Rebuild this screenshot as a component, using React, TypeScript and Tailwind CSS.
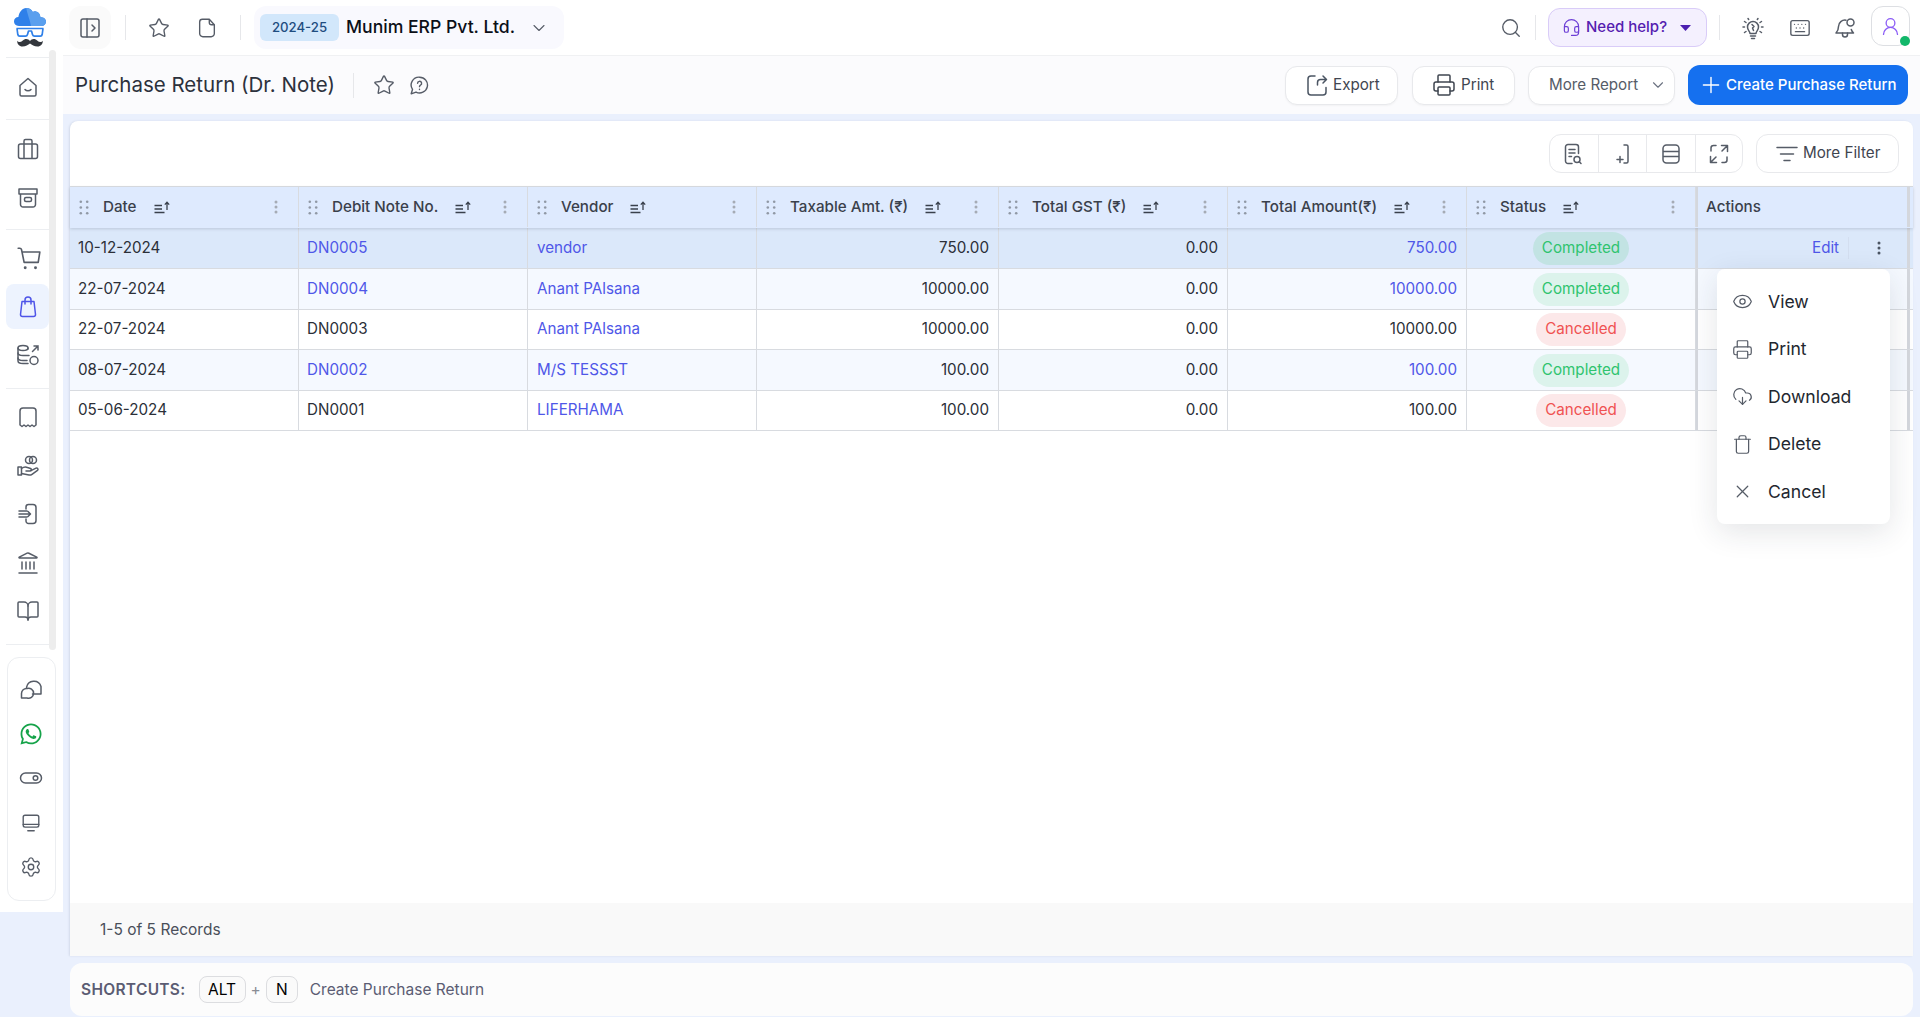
import { ReactNode } from 'react'
import {
  BookOpen,
  ChevronDown,
  CloudDownload,
  Eye,
  Headset,
  Keyboard,
  Landmark,
  PanelLeftOpen,
  Plus,
  Printer,
  Search,
  Settings,
  Star,
  Trash,
  UserRound,
  X,
} from 'lucide-react'
import { FaWhatsapp } from 'react-icons/fa'

type Row = {
  date: string
  no: string
  noLink: boolean
  vendor: string
  taxable: string
  total: string
  totalLink: boolean
  status: 'Completed' | 'Cancelled'
  height: string
  bg: string
  highlight?: boolean
}

const rows: Row[] = [
  { date: '10-12-2024', no: 'DN0005', noLink: true, vendor: 'vendor', taxable: '750.00', total: '750.00', totalLink: true, status: 'Completed', height: 'h-[41px]', bg: 'bg-[#dbe8fa]', highlight: true },
  { date: '22-07-2024', no: 'DN0004', noLink: true, vendor: 'Anant PAlsana', taxable: '10000.00', total: '10000.00', totalLink: true, status: 'Completed', height: 'h-[41px]', bg: 'bg-[#f5f9ff]' },
  { date: '22-07-2024', no: 'DN0003', noLink: false, vendor: 'Anant PAlsana', taxable: '10000.00', total: '10000.00', totalLink: false, status: 'Cancelled', height: 'h-[40px]', bg: 'bg-white' },
  { date: '08-07-2024', no: 'DN0002', noLink: true, vendor: 'M/S TESSST', taxable: '100.00', total: '100.00', totalLink: true, status: 'Completed', height: 'h-[41px]', bg: 'bg-[#f5f9ff]' },
  { date: '05-06-2024', no: 'DN0001', noLink: false, vendor: 'LIFERHAMA', taxable: '100.00', total: '100.00', totalLink: false, status: 'Cancelled', height: 'h-[40px]', bg: 'bg-white' },
]

const columns = [
  { label: 'Date', width: 'w-[229px]' },
  { label: 'Debit Note No.', width: 'w-[229px]' },
  { label: 'Vendor', width: 'w-[229px]' },
  { label: 'Taxable Amt. (₹)', width: 'w-[242px]' },
  { label: 'Total GST (₹)', width: 'w-[229px]' },
  { label: 'Total Amount(₹)', width: 'w-[239px]' },
  { label: 'Status', width: 'w-[229px]' },
]

function Logo() {
  return (
    <svg width="34" height="41" viewBox="0 0 34 41" fill="none">
      <path d="M6 19C2.500 19 1 16.500 1 14.300 1 11.700 3 9.900 5.400 9.900 6 5.200 9.400 1 13.200 1c3 0 5.400 1.500 6.600 4 1-.6 2-.8 3-.6 2.600.4 4.400 2.400 4.600 5.500 3 .2 5.600 1.800 5.600 4.600 0 2.400-2 4.500-4.600 4.500z" fill="#2f80e9" />
      <path d="M13.200 1c3 0 5.400 1.500 6.600 4 1-.6 2-.8 3-.6 2.600.4 4.400 2.400 4.600 5.500 3 .2 5.600 1.800 5.600 4.600 0 2.400-2 4.500-4.600 4.500H18c-1-6-4-13-4.800-18z" fill="#5a9fee" />
      <path d="M3.500 21.500h27M4 21.500l.8 6c.2 1 .9 1.700 1.900 1.700h5.800c1 0 1.700-.6 2-1.600l1-3.600h3l1 3.600c.3 1 1 1.600 2 1.600h5.800c1 0 1.700-.7 1.900-1.700l.8-6" stroke="#2f80e9" strokeWidth="1.700" strokeLinejoin="round" />
      <path d="M17 34c-1-1.400-2.800-2.500-4.600-2-2.400.7-3.300 3-6 3-1 0-1.700-.4-2.200-1.200-.2 3 2 5.800 5.300 5.800 3.300 0 5.600-2 7.500-3.200 1.900 1.200 4.200 3.200 7.500 3.200 3.300 0 5.500-2.800 5.300-5.800-.5.8-1.200 1.200-2.200 1.200-2.700 0-3.600-2.300-6-3-1.800-.5-3.600.6-4.600 2z" fill="#33373d" />
    </svg>
  )
}

function HomeIcon() {
  return (
    <svg width="24" height="24" viewBox="0 0 24 24" fill="none" stroke="#565c67" strokeWidth="1.500" strokeLinejoin="round" strokeLinecap="round">
      <path d="M4 10.500 12 3.500l8 7v9a1.500 1.500 0 0 1-1.500 1.500h-13A1.500 1.500 0 0 1 4 19.500z" />
      <path d="M9 14.500c1.500 1.800 4.500 1.800 6 0" />
    </svg>
  )
}

function LuggageIcon() {
  return (
    <svg width="24" height="24" viewBox="0 0 24 24" fill="none" stroke="#565c67" strokeWidth="1.500" strokeLinejoin="round">
      <rect x="2.500" y="7" width="19" height="14.500" rx="2" />
      <path d="M8 21.500V4a1.500 1.500 0 0 1 1.500-1.500h5A1.500 1.500 0 0 1 16 4v17.500" />
    </svg>
  )
}

function ArchiveIcon() {
  return (
    <svg width="24" height="24" viewBox="0 0 24 24" fill="none" stroke="#565c67" strokeWidth="1.500" strokeLinejoin="round">
      <path d="M3 3h18v5H3z" />
      <path d="M4.500 8v10.500a2.500 2.500 0 0 0 2.500 2.500h10a2.500 2.500 0 0 0 2.500-2.500V8" />
      <rect x="8.500" y="11.500" width="7" height="4" rx="1.500" />
    </svg>
  )
}

function CartIcon() {
  return (
    <svg width="26" height="26" viewBox="0 0 24 24" fill="none" stroke="#565c67" strokeWidth="1.500" strokeLinejoin="round" strokeLinecap="round">
      <path d="M2 3h1.500c.8 0 1.400.5 1.600 1.300L7.500 16h13l1.500-9.500H5.500" />
      <circle cx="8.500" cy="21" r=".6" fill="#565c67" />
      <circle cx="18" cy="21" r=".6" fill="#565c67" />
    </svg>
  )
}

function BagIcon() {
  return (
    <svg width="24" height="24" viewBox="0 0 24 24" fill="none" stroke="#4f55e8" strokeWidth="1.500" strokeLinejoin="round" strokeLinecap="round">
      <path d="M6 6.500h12l1.500 13a2 2 0 0 1-2 2h-11a2 2 0 0 1-2-2z" />
      <path d="M9 9V5a3 3 0 0 1 6 0v4" />
    </svg>
  )
}

function DataIcon() {
  return (
    <svg width="24" height="24" viewBox="0 0 24 24" fill="none" stroke="#565c67" strokeWidth="1.500" strokeLinecap="round">
      <path d="M12 6V5c0-1.400-2.200-2.500-5-2.500S2 3.600 2 5v13c0 1.400 2.200 2.500 5 2.500h5" />
      <path d="M2 5c0 1.400 2.200 2.500 5 2.500s5-1.100 5-2.500M2 10c0 1.400 2.200 2.500 5 2.500h6M2 15c0 1.400 2.200 2.500 5 2.500h4" />
      <circle cx="18" cy="17.500" r="4" />
      <path d="M16.500 8.500l5.500-5.500M18 3h4v4" />
    </svg>
  )
}

function ReceiptIcon() {
  return (
    <svg width="24" height="24" viewBox="0 0 24 24" fill="none" stroke="#565c67" strokeWidth="1.500" strokeLinejoin="round" strokeLinecap="round">
      <path d="M4 20V6a3 3 0 0 1 3-3h10a3 3 0 0 1 3 3v14l-2 1.500-2-1.500-2 1.500-2-1.500-2 1.500-2-1.500-2 1.500z" />
    </svg>
  )
}

function CoinsHandIcon() {
  return (
    <svg width="24" height="24" viewBox="0 0 24 24" fill="none" stroke="#565c67" strokeWidth="1.500" strokeLinejoin="round" strokeLinecap="round">
      <circle cx="13" cy="6" r="3.500" />
      <circle cx="17" cy="6" r="3.500" />
      <path d="M2 13h3.500v8H2z" />
      <path d="M5.500 14.500c2-1.500 4-2 6-1l3 1c1.300.5 1 2.500-.5 2.500h-4" />
      <path d="M5.500 19.500l7.500 1.500c1 .2 2 0 3-.7l5.500-4c1.200-1 0-2.800-1.500-2.200l-5 2.500" />
    </svg>
  )
}

function SignInIcon() {
  return (
    <svg width="24" height="24" viewBox="0 0 24 24" fill="none" stroke="#565c67" strokeWidth="1.500" strokeLinejoin="round" strokeLinecap="round">
      <path d="M10 7V5a2.500 2.500 0 0 1 2.500-2.500H17a3 3 0 0 1 3 3v13a3 3 0 0 1-3 3h-4.500A2.500 2.500 0 0 1 10 19v-2" />
      <path d="M3 9h8M3 12h11M3 15h8M12 9.500l2.500 2.500-2.500 2.500" />
    </svg>
  )
}

function ChatsIcon() {
  return (
    <svg width="24" height="24" viewBox="0 0 24 24" fill="none" stroke="#565c67" strokeWidth="1.500" strokeLinejoin="round" strokeLinecap="round">
      <path d="M7.500 10.500A7.500 7.500 0 0 1 22 9.500V17h-8.500" />
      <path d="M8 11.500a5 5 0 1 1 0 9.500H2.500v-4.500A5 5 0 0 1 8 11.500z" />
    </svg>
  )
}

function ToggleIcon() {
  return (
    <svg width="24" height="24" viewBox="0 0 24 24" fill="none" stroke="#565c67" strokeWidth="1.500">
      <rect x="1.500" y="7" width="21" height="10" rx="5" />
      <circle cx="16.500" cy="12" r="2.300" />
    </svg>
  )
}

function ScreenIcon() {
  return (
    <svg width="22" height="22" viewBox="0 0 24 24" fill="none" stroke="#565c67" strokeWidth="1.500" strokeLinecap="round">
      <rect x="3.500" y="3.500" width="17" height="13" rx="2" />
      <path d="M3.500 13.500h17M8.500 20.500h7" />
    </svg>
  )
}

function BulbIcon() {
  return (
    <svg width="24" height="24" viewBox="0 0 24 24" fill="none" stroke="#565c67" strokeWidth="1.500" strokeLinecap="round" strokeLinejoin="round">
      <path d="M9 17.500c0-2-2.500-3-2.500-6.500a5.500 5.500 0 0 1 11 0c0 3.500-2.500 4.500-2.500 6.500z" />
      <path d="M9.500 20h5M10.500 22.500h3M11 8.500l2 2-1.500 1.500 1 2.500" />
      <path d="M3.500 5.500l1.500 1M20.500 5.500l-1.500 1M2 11h1.500M20.500 11H22M3.500 16.500l1.500-1M20.500 16.500l-1.500-1M7 2.500l.7 1M17 2.500l-.7 1" />
    </svg>
  )
}

function BellIcon() {
  return (
    <svg width="24" height="24" viewBox="0 0 24 24" fill="none" stroke="#565c67" strokeWidth="1.500" strokeLinejoin="round" strokeLinecap="round">
      <path d="M13 4.200A6.500 6.500 0 0 0 5.500 10.500c0 3.500-1 5-2.500 6.500h17.500c-1-1-1.800-2-2.200-3.500" />
      <path d="M9.500 17v1.500a2.500 2.500 0 0 0 5 0V17" />
      <circle cx="17.500" cy="6.500" r="3.500" />
    </svg>
  )
}

function FileIcon() {
  return (
    <svg width="22" height="22" viewBox="0 0 24 24" fill="none" stroke="#565c67" strokeWidth="1.500" strokeLinejoin="round">
      <path d="M7 2.500h7.500L20 8.500V18a3.500 3.500 0 0 1-3.500 3.500h-9A3.500 3.500 0 0 1 4 18V5.500a3 3 0 0 1 3-3z" />
      <path d="M14.500 2.500V6A2.500 2.500 0 0 0 17 8.500h3" />
    </svg>
  )
}

function ExportIcon() {
  return (
    <svg width="24" height="24" viewBox="0 0 24 24" fill="none" stroke="#4b5563" strokeWidth="1.500" strokeLinejoin="round" strokeLinecap="round">
      <path d="M10 3H6a3 3 0 0 0-3 3v13a3 3 0 0 0 3 3h12a3 3 0 0 0 3-3v-4.500" />
      <path d="M12.500 12V9.500A3 3 0 0 1 15.500 6.500H21M18 3l3.500 3.500L18 10" />
    </svg>
  )
}

function DocSearchIcon() {
  return (
    <svg width="24" height="24" viewBox="0 0 24 24" fill="none" stroke="#565c67" strokeWidth="1.500" strokeLinejoin="round" strokeLinecap="round">
      <path d="M11 21.500H7A2.500 2.500 0 0 1 4.500 19V5A2.500 2.500 0 0 1 7 2.500h8A2.500 2.500 0 0 1 17.500 5v6.500" />
      <path d="M8 7.500h6M8 11h6M8 14.500h2.500" />
      <circle cx="16" cy="17.500" r="3" />
      <path d="M18.300 19.800l1.700 1.700" />
    </svg>
  )
}

function ColumnIcon() {
  return (
    <svg width="24" height="24" viewBox="0 0 24 24" fill="none" stroke="#565c67" strokeWidth="1.500" strokeLinejoin="round" strokeLinecap="round">
      <path d="M13 3h2.500A1.500 1.500 0 0 1 17 4.500v15a1.500 1.500 0 0 1-1.500 1.500H13" />
      <path d="M6 17.500h6M9 14.500v6" />
    </svg>
  )
}

function RowsIcon() {
  return (
    <svg width="24" height="24" viewBox="0 0 24 24" fill="none" stroke="#565c67" strokeWidth="1.500" strokeLinejoin="round">
      <rect x="4" y="3" width="16" height="18" rx="3.500" />
      <path d="M4 9.500h16M4 14.500h16" />
    </svg>
  )
}

function ExpandIcon() {
  return (
    <svg width="24" height="24" viewBox="0 0 24 24" fill="none" stroke="#565c67" strokeWidth="1.500" strokeLinejoin="round" strokeLinecap="round">
      <path d="M4 9V6a2.500 2.500 0 0 1 2.500-2.500H9" />
      <path d="M20 15v3a2.500 2.500 0 0 1-2.500 2.500H15" />
      <path d="M14.500 3.500H20.500V9.500M20.500 3.500l-5.500 5.500" />
      <path d="M9.500 20.500H3.500V14.500M3.500 20.500l5.500-5.500" />
    </svg>
  )
}

function FilterIcon() {
  return (
    <svg width="22" height="18" viewBox="0 0 22 18" fill="none" stroke="#565c67" strokeWidth="1.500" strokeLinecap="round">
      <path d="M1 2.500h20M4.500 9h13M8 15.500h6" />
    </svg>
  )
}

function Grip() {
  return (
    <svg width="10" height="15" viewBox="0 0 10 15" fill="#9098a5" className="shrink-0">
      <circle cx="1.800" cy="1.800" r="1.300" />
      <circle cx="8.200" cy="1.800" r="1.300" />
      <circle cx="1.800" cy="7.500" r="1.300" />
      <circle cx="8.200" cy="7.500" r="1.300" />
      <circle cx="1.800" cy="13.200" r="1.300" />
      <circle cx="8.200" cy="13.200" r="1.300" />
    </svg>
  )
}

function SortIcon() {
  return (
    <svg width="16" height="13" viewBox="0 0 16 13" fill="none" stroke="#39404c" strokeWidth="1.300" className="shrink-0">
      <path d="M0.500 4.500h7.500M0.500 8h7.500M0.500 11.500h10" />
      <path d="M13 9V1.500M10.800 3.600 13 1.200l2.200 2.400" />
    </svg>
  )
}

function Kebab({ color = '#a5abb5' }: { color?: string }) {
  return (
    <svg width="4" height="14" viewBox="0 0 4 14" fill={color} className="shrink-0">
      <circle cx="2" cy="2" r="1.500" />
      <circle cx="2" cy="7" r="1.500" />
      <circle cx="2" cy="12" r="1.500" />
    </svg>
  )
}

function OutlineButton({ className, children }: { className: string; children: ReactNode }) {
  return (
    <button className={`flex items-center rounded-xl border border-[#e8e9ec] bg-white text-[15.2px] text-[#3f4550] shadow-[0_1px_2px_rgba(0,0,0,0.04)] ${className}`}>
      {children}
    </button>
  )
}

function SideRow({ active, children }: { active?: boolean; children: ReactNode }) {
  return (
    <div className="flex h-[48.5px] items-center">
      <div className={`ml-[6px] flex h-[45px] w-[43px] items-center pl-[10px] ${active ? 'rounded-lg bg-[#edf3fe]' : ''}`}>{children}</div>
    </div>
  )
}

function SideDivider() {
  return <div className="ml-[6px] w-[43px] border-t border-[#eceef1]" />
}

function GroupRow({ children }: { children: ReactNode }) {
  return <div className="flex h-[44.5px] items-center justify-center pr-[1px]">{children}</div>
}

function Sidebar() {
  return (
    <aside className="relative h-[912px] w-[63px] shrink-0 bg-white">
      <div className="flex h-[57px] items-center pb-[2px] pl-[13px]">
        <Logo />
      </div>
      <SideDivider />
      <div className="h-[61px] pt-[5px]">
        <SideRow>
          <HomeIcon />
        </SideRow>
      </div>
      <SideDivider />
      <div className="h-[109px] pt-[5px]">
        <SideRow>
          <LuggageIcon />
        </SideRow>
        <SideRow>
          <ArchiveIcon />
        </SideRow>
      </div>
      <SideDivider />
      <div className="h-[158px] pt-[4px]">
        <SideRow>
          <CartIcon />
        </SideRow>
        <SideRow active>
          <BagIcon />
        </SideRow>
        <SideRow>
          <DataIcon />
        </SideRow>
      </div>
      <SideDivider />
      <div className="h-[255px] pt-[4px]">
        <SideRow>
          <ReceiptIcon />
        </SideRow>
        <SideRow>
          <CoinsHandIcon />
        </SideRow>
        <SideRow>
          <SignInIcon />
        </SideRow>
        <SideRow>
          <Landmark size={24} strokeWidth={1.5} color="#565c67" />
        </SideRow>
        <SideRow>
          <BookOpen size={24} strokeWidth={1.5} color="#565c67" />
        </SideRow>
      </div>
      <SideDivider />
      <div className="ml-[7px] mt-[12px] h-[244px] w-[49px] rounded-xl border border-[#eceef1] pt-[9px]">
        <GroupRow>
          <ChatsIcon />
        </GroupRow>
        <GroupRow>
          <FaWhatsapp size={24} color="#16a34a" />
        </GroupRow>
        <GroupRow>
          <ToggleIcon />
        </GroupRow>
        <GroupRow>
          <ScreenIcon />
        </GroupRow>
        <GroupRow>
          <Settings size={22} strokeWidth={1.5} color="#565c67" />
        </GroupRow>
      </div>
      {/* sidebar scrollbar */}
      <div className="absolute left-[49px] top-[50px] h-[600px] w-[7px] rounded-full bg-[#ededed]" />
    </aside>
  )
}

function TopBar() {
  return (
    <header className="flex h-[56px] items-center border-b border-[#f0f1f3] bg-white pl-[6px] pr-[10px]">
      <div className="flex h-[43px] w-[42px] items-center justify-center rounded-xl bg-[#fafafa]">
        <PanelLeftOpen size={24} strokeWidth={1.5} color="#565c67" />
      </div>
      <div className="ml-[14px] h-[25px] w-px bg-[#e6e7ea]" />
      <div className="ml-[21px] flex w-6 justify-center">
        <Star size={22} strokeWidth={1.5} color="#565c67" />
      </div>
      <div className="ml-[24px] flex w-6 justify-center">
        <FileIcon />
      </div>
      <div className="ml-[21px] h-[25px] w-px bg-[#e6e7ea]" />
      <div className="ml-[13px] flex h-[43px] w-[310px] items-center rounded-xl bg-[#f9f9fe] pl-[6px]">
        <span className="flex h-[27px] w-[79px] items-center justify-center rounded-md bg-[#d2e7fb] text-[13.2px] font-medium text-[#1f4d80]">2024-25</span>
        <span className="ml-[7px] text-[17.6px] font-medium text-[#0b0f17]">Munim ERP Pvt. Ltd.</span>
        <ChevronDown className="ml-[14px]" size={20} strokeWidth={1.3} color="#565c67" />
      </div>
      <div className="ml-auto flex w-6 justify-center">
        <Search size={22} strokeWidth={1.5} color="#565c67" />
      </div>
      <div className="ml-[12px] h-[25px] w-px bg-[#e6e7ea]" />
      <button className="ml-[12px] flex h-[39px] w-[159px] items-center rounded-xl border border-[#d9ccf8] bg-[#f4f0fe] pl-[13px] text-[15px] font-medium text-[#5520b0]">
        <Headset size={19} strokeWidth={1.5} color="#6d3fd6" />
        <span className="ml-[5px]">Need help?</span>
        <svg className="ml-[13px]" width="11" height="6" viewBox="0 0 11 6" fill="#4c1fb0">
          <path d="M0 0h11L5.500 6z" />
        </svg>
      </button>
      <div className="ml-[12px] h-[25px] w-px bg-[#e6e7ea]" />
      <div className="ml-[21px] flex w-6 justify-center">
        <BulbIcon />
      </div>
      <div className="ml-[23px] flex w-6 justify-center">
        <Keyboard size={22} strokeWidth={1.5} color="#565c67" />
      </div>
      <div className="ml-[21px] flex w-6 justify-center">
        <BellIcon />
      </div>
      <div className="relative mb-[3px] ml-[14px] flex h-[40px] w-[39px] items-center justify-center rounded-xl border border-[#dddfe3] bg-white">
        <UserRound size={21} strokeWidth={1.5} color="#8b5cf6" />
        <span className="absolute -bottom-[1px] -right-[1px] h-[10px] w-[10px] rounded-full bg-[#12b76a]" />
      </div>
    </header>
  )
}

function PageHeader() {
  return (
    <div className="flex h-[58px] items-center bg-[#fbfbfd] pl-[12px] pr-[12px]">
      <h1 className="text-[20.5px] font-normal text-[#2c313c]">Purchase Return (Dr. Note)</h1>
      <div className="ml-[18px] h-[25px] w-px bg-[#e6e7ea]" />
      <div className="ml-[18px] flex w-6 justify-center">
        <Star size={22} strokeWidth={1.5} color="#565c67" />
      </div>
      <div className="ml-[12px] flex w-6 justify-center">
        <svg width="21" height="21" viewBox="0 0 24 24" fill="none" stroke="#565c67" strokeWidth="1.600" strokeLinecap="round" strokeLinejoin="round">
          <path d="M12 2.500a9 9 0 1 1-4 17l-5.500 2 1.500-5A9 9 0 0 1 12 2.500z" />
          <path d="M9.800 9.500a2.300 2.300 0 1 1 3.300 2.100c-.7.400-1.100.9-1.100 1.700M12 16.300v.2" />
        </svg>
      </div>
      <OutlineButton className="ml-auto h-[39px] w-[113px] pl-[19px]">
        <ExportIcon />
        <span className="ml-[4px]">Export</span>
      </OutlineButton>
      <OutlineButton className="ml-[14px] h-[39px] w-[103px] pl-[19px]">
        <Printer size={24} strokeWidth={1.5} color="#3f4550" />
        <span className="ml-[5px]">Print</span>
      </OutlineButton>
      <OutlineButton className="ml-[13px] h-[39px] w-[147px] pl-[20px] text-[#565c67]">
        <span>More Report</span>
        <ChevronDown className="ml-[11px]" size={18} strokeWidth={1.5} color="#6b7280" />
      </OutlineButton>
      <button className="ml-[13px] flex h-[40px] w-[220px] items-center rounded-xl bg-[#1570ef] pl-[10px] text-[15px] font-medium text-white">
        <Plus size={26} strokeWidth={1.3} />
        <span className="ml-[2px]">Create Purchase Return</span>
      </button>
    </div>
  )
}

function StatusBadge({ status, highlight }: { status: Row['status']; highlight?: boolean }) {
  if (status === 'Cancelled') {
    return <span className="flex h-[33px] w-[90px] items-center justify-center rounded-full bg-[#fce8e9] text-[15.2px] text-[#f05252]">Cancelled</span>
  }
  return (
    <span className={`flex h-[33px] w-[96px] items-center justify-center rounded-full text-[15.2px] text-[#2fc46f] ${highlight ? 'bg-[#c2e3e3]' : 'bg-[#dcf3ec]'}`}>
      Completed
    </span>
  )
}

function Table() {
  const cell = 'flex items-center border-r border-[#d8dbe0] text-[15.2px]'
  const link = 'text-[#4f57e8]'
  const plain = 'text-[#2b2f38]'
  return (
    <div className="border-t border-[#dadde2]">
      <div className="relative z-10 flex h-[41px] bg-[#deeafe] pb-[1px] text-[15.2px] font-medium text-[#3a404b] shadow-[0_1px_3px_rgba(60,70,90,0.2)]">
        {columns.map((c) => (
          <div key={c.label} className={`flex items-center border-r border-[#d8dbe0] pl-[9px] pr-[20px] ${c.width}`}>
            <Grip />
            <span className="ml-[14px] whitespace-nowrap">{c.label}</span>
            <span className="ml-[17px]">
              <SortIcon />
            </span>
            <span className="ml-auto">
              <Kebab />
            </span>
          </div>
        ))}
        <div className="flex w-[214px] items-center border-l-[2px] border-r-[3px] border-[#d4d7dd] pl-[8px]">Actions</div>
      </div>
      {rows.map((r) => (
        <div key={r.no} className={`flex border-b border-[#d8dbe0] ${r.height} ${r.bg}`}>
          <div className={`${cell} w-[229px] pl-[8px] ${plain}`}>{r.date}</div>
          <div className={`${cell} w-[229px] pl-[8px] ${r.noLink ? link : plain}`}>{r.no}</div>
          <div className={`${cell} w-[229px] pl-[9px] ${link}`}>{r.vendor}</div>
          <div className={`${cell} w-[242px] justify-end pr-[9px] ${plain}`}>{r.taxable}</div>
          <div className={`${cell} w-[229px] justify-end pr-[9px] ${plain}`}>0.00</div>
          <div className={`${cell} w-[239px] justify-end pr-[9px] ${r.totalLink ? link : plain}`}>{r.total}</div>
          <div className={`${cell} w-[229px] justify-center`}>
            <StatusBadge status={r.status} highlight={r.highlight} />
          </div>
          <div className="flex w-[214px] items-center border-l-[2px] border-r-[3px] border-[#d4d7dd]">
            {r.highlight && (
              <>
                <span className="ml-[114px] text-[15.2px] text-[#4f57e8]">Edit</span>
                <span className="ml-[9px] h-[22px] w-px bg-[#d3def0]" />
                <span className="ml-[28px]">
                  <Kebab color="#4b5563" />
                </span>
              </>
            )}
          </div>
        </div>
      ))}
    </div>
  )
}

function ActionMenu() {
  const icon = { size: 21, strokeWidth: 1.4, color: '#565c67' }
  const items = [
    { label: 'View', icon: <Eye {...icon} /> },
    { label: 'Print', icon: <Printer {...icon} /> },
    { label: 'Download', icon: <CloudDownload {...icon} /> },
    { label: 'Delete', icon: <Trash {...icon} /> },
    { label: 'Cancel', icon: <X {...icon} /> },
  ]
  return (
    <div className="absolute left-[1647px] top-[148px] z-20 h-[255px] w-[173px] rounded-lg bg-white pt-[9px] shadow-[0_8px_30px_rgba(30,40,60,0.12)]">
      {items.map((item) => (
        <div key={item.label} className="flex h-[47.5px] items-center pl-[15px] text-[17.6px] text-[#23272f]">
          {item.icon}
          <span className="ml-[15px]">{item.label}</span>
        </div>
      ))}
    </div>
  )
}

function Toolbar() {
  return (
    <div className="flex h-[65px] justify-end pr-[14px] pt-[13px]">
      <div className="flex h-[39px] w-[194px] rounded-xl border border-[#e8e9ec] bg-white">
        <div className="flex w-[49px] items-center justify-center border-r border-[#e8e9ec] pr-[2px]">
          <DocSearchIcon />
        </div>
        <div className="flex w-[48px] items-center justify-center border-r border-[#e8e9ec]">
          <ColumnIcon />
        </div>
        <div className="flex w-[49px] items-center justify-center border-r border-[#e8e9ec]">
          <RowsIcon />
        </div>
        <div className="flex flex-1 items-center justify-center">
          <ExpandIcon />
        </div>
      </div>
      <button className="ml-[13px] flex h-[39px] w-[143px] items-center rounded-xl border border-[#e8e9ec] bg-white pl-[19px] text-[15.2px] text-[#3f4550]">
        <FilterIcon />
        <span className="ml-[5px]">More Filter</span>
      </button>
    </div>
  )
}

export default function App() {
  return (
    <div className="flex h-[1017px] w-[1920px] overflow-hidden bg-[#eaf0fd] [font-family:Inter,sans-serif]">
      <Sidebar />
      <main className="flex flex-1 flex-col">
        <TopBar />
        <PageHeader />
        <div className="flex flex-1 flex-col pl-[7px] pr-[7px] pt-[7px]">
          <section className="relative flex h-[835px] flex-col rounded-t-lg bg-white shadow-[-1px_0_2px_rgba(90,100,130,0.15)]">
            <Toolbar />
            <Table />
            <ActionMenu />
            <div className="mt-auto flex h-[53px] items-center bg-[#f9f9f9] pl-[30px] text-[15.5px] text-[#4a4f5a]">1-5 of 5 Records</div>
          </section>
          <div className="mt-[7px] flex h-[53px] items-center rounded-xl bg-[#fcfcfc] pl-[11px] text-[15.5px]">
            <span className="font-semibold tracking-[0.3px] text-[#5b5c73]">SHORTCUTS:</span>
            <span className="ml-[13px] flex h-[27px] w-[47px] items-center justify-center rounded-lg border border-[#dcdde0] bg-[#fafafa] text-black">ALT</span>
            <span className="mx-[5px] text-[#8a8d95]">+</span>
            <span className="flex h-[27px] w-[32px] items-center justify-center rounded-lg border border-[#dcdde0] bg-[#fafafa] text-black">N</span>
            <span className="ml-[12px] text-[#5b5c73]">Create Purchase Return</span>
          </div>
        </div>
      </main>
    </div>
  )
}
